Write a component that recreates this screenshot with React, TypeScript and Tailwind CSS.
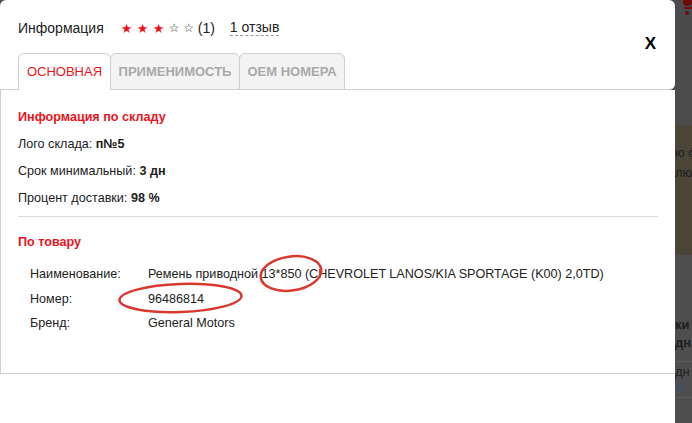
import React from "react";

const RED = "text-[#e8141c]";

const Stars = () => (
  <div className="flex items-center ml-[17px] font-['DejaVu_Sans',sans-serif] leading-none">
    {[0, 1, 2].map((i) => (
      <span key={i} className={`${RED} w-[16px] text-[13px]`}>
        ★
      </span>
    ))}
    {[0, 1].map((i) => (
      <span key={i} className="text-[#333] w-[14.5px] text-[12px]">
        ☆
      </span>
    ))}
  </div>
);

const tabs = [
  { label: "ОСНОВНАЯ", active: true, w: "w-[93px]" },
  { label: "ПРИМЕНИМОСТЬ", active: false, w: "w-[130px]" },
  { label: "ОЕМ НОМЕРА", active: false, w: "w-[106px]" },
];

const productRows = [
  { label: "Наименование:", value: "Ремень приводной 13*850 (CHEVROLET LANOS/KIA SPORTAGE (K00) 2,0TD)" },
  { label: "Номер:", value: "96486814" },
  { label: "Бренд:", value: "General Motors" },
];

const SideStrip = () => (
  <div className="w-[17px] h-full flex flex-col overflow-hidden bg-[#4b4b4b] text-[13px] leading-[20px] text-[#1e1e1e] whitespace-nowrap">
    <div className="h-[40px] relative">
      <div className="absolute left-[8px] top-[-4px] w-[9px] h-[10px] rounded-b-[4px] bg-[#6e0c0c]" />
      <div className="absolute left-[9px] top-[7px] w-[8px] h-[2px] bg-[#6e0c0c]" />
      <div className="absolute left-[10px] top-[11px] w-[4px] h-[4px] rounded-full bg-[#6e0c0c]" />
    </div>
    <div className="h-[85px] bg-[#4c4c4c]" />
    <div className="h-[130px] bg-[#4a4537] pt-[18px]">
      <div>ю с</div>
      <div>лю.</div>
    </div>
    <div className="flex-1 bg-[#4e4e4e] pt-[61px]">
      <div className="font-bold leading-[18px]">ки (</div>
      <div className="font-bold leading-[18px] border-b border-[#5d5d5d] pb-[9px]">дн.</div>
      <div className="leading-[14px] pt-[3px]">дн</div>
      <div className="leading-[16px] text-[#3f5163] border-b border-[#5d5d5d] pb-[2px]">М</div>
    </div>
  </div>
);

export default function App() {
  return (
    <div className="w-[692px] h-[423px] flex overflow-hidden bg-[#4b4b4b] font-['Liberation_Sans',Arial,sans-serif] text-[#222]">
      <div className="w-[675px] h-full flex flex-col relative">
        {/* header */}
        <div className="h-[90px] bg-white rounded-tl-[6px] rounded-tr-[6px] rounded-br-[6px] border-b border-[#cfcfcf] flex justify-between">
          <div className="pl-[18px] pt-[19px] flex flex-col">
            <div className="h-[18px] flex items-center text-[14px]">
              <span>Информация</span>
              <Stars />
              <span>(1)</span>
              <span className="ml-[15px] border-b border-dashed border-[#999] leading-[15px]">1 отзыв</span>
            </div>
            <div className="mt-[16px] h-[37px] -mb-px flex">
              {tabs.map((t) => (
                <div
                  key={t.label}
                  className={`${t.w} h-full flex items-center justify-center rounded-t-[6px] border border-[#cfcfcf] text-[13px] ${
                    t.active
                      ? `${RED} bg-white border-b-0`
                      : "text-[#a9a9a9] bg-[#f3f3f3] font-bold -ml-px"
                  }`}
                >
                  {t.label}
                </div>
              ))}
            </div>
          </div>
          <button className="mt-[33px] mr-[19px] h-[20px] text-[17px] font-bold leading-none text-black">X</button>
        </div>

        {/* body */}
        <div className="h-[284px] bg-white border-l border-b border-[#cfcfcf] pl-[17px] pr-[17px] pt-[14px] text-[12.6px]">
          <div className={`leading-[27px] font-bold ${RED}`}>Информация по складу</div>
          <div className="leading-[27px]">
            Лого склада: <b>п№5</b>
          </div>
          <div className="leading-[27px]">
            Срок минимальный: <b>3 дн</b>
          </div>
          <div className="leading-[27px]">
            Процент доставки: <b>98 %</b>
          </div>
          <div className="mt-[4px] border-t border-[#dcdcdc]" />
          <div className={`mt-[12px] leading-[27px] font-bold ${RED}`}>По товару</div>
          <div className="mt-[6px] pl-[12px] flex flex-col">
            {productRows.map((r) => (
              <div key={r.label} className="flex leading-[24.5px]">
                <span className="w-[118px]">{r.label}</span>
                <span>{r.value}</span>
              </div>
            ))}
          </div>
        </div>

        <div className="flex-1 bg-white" />

        {/* hand-drawn annotation marks */}
        <svg className="absolute left-0 top-0 pointer-events-none" width="675" height="423">
          <ellipse cx="291" cy="273.5" rx="30.5" ry="17" transform="rotate(-8 291 273.5)" fill="none" stroke="#d93a30" strokeWidth="2.5" />
          <ellipse cx="180.5" cy="298" rx="61" ry="14" transform="rotate(-2 180.5 298)" fill="none" stroke="#d93a30" strokeWidth="2.5" />
        </svg>
      </div>
      <SideStrip />
    </div>
  );
}
